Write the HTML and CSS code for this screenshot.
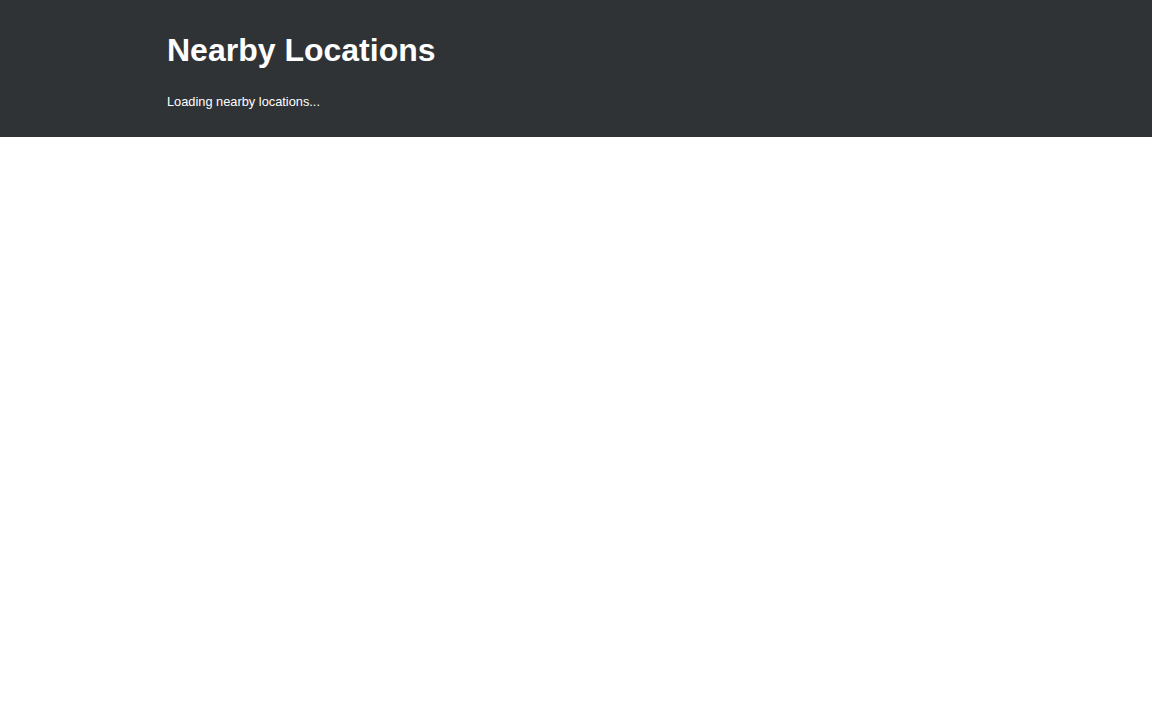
FILE: index.html
```html
<!DOCTYPE html>
<html lang="en">
<head>
<meta charset="utf-8">
<title>Nearby Locations</title>
<link rel="stylesheet" href="styles.css">
</head>
<body>
<header class="site-header">
  <div class="container">
    <h1 class="title">Nearby Locations</h1>
    <p class="status">Loading nearby locations...</p>
  </div>
</header>
<main class="content"></main>
</body>
</html>
```
FILE: styles.css
```css
html, body {
  margin: 0;
  padding: 0;
  background: #ffffff;
  font-family: "Liberation Sans", Arial, sans-serif;
}

.site-header {
  background: #303336;
  color: #ffffff;
  padding: 32px 0 28px;
}

.container {
  max-width: 818px;
  margin: 0 auto;
}

.title {
  margin: 0 0 25px;
  font-size: 32px;
  font-weight: 700;
  line-height: normal;
}

.status {
  margin: 0;
  font-size: 12.8px;
  line-height: normal;
}
```
